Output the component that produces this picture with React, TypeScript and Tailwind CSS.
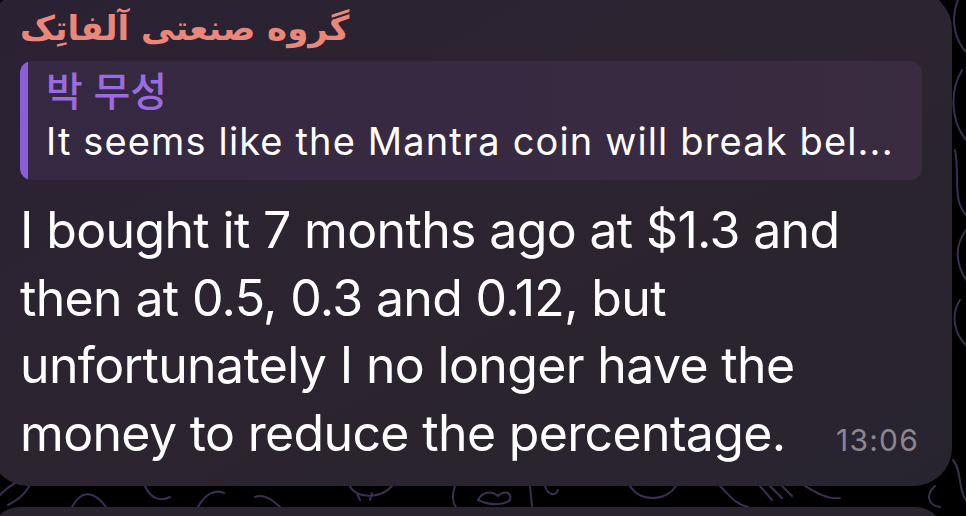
import React from "react";

const lines = [
  "I bought it 7 months ago at $1.3 and",
  "then at 0.5, 0.3 and 0.12, but",
  "unfortunately I no longer have the",
];

function Wallpaper() {
  return (
    <svg className="absolute inset-0" width="966" height="516" viewBox="0 0 966 516" fill="none">
      <g stroke="#3a2f52" strokeWidth="2" strokeLinecap="round">
        <path d="M958 0 C950 20 955 40 966 52" />
        <path d="M962 70 C950 90 950 120 966 140" />
        <path d="M955 150 C960 175 952 200 966 215" />
        <path d="M966 230 C955 245 955 262 966 280" />
        <path d="M960 300 C950 315 955 335 966 345" />
        <path d="M953 460 C962 470 958 490 966 500" />
        <path d="M0 495 C10 485 22 478 32 480 C28 492 18 500 8 505" />
        <path d="M72 507 C80 492 92 488 106 507" />
        <path d="M145 486 C150 498 160 502 170 497" />
        <path d="M198 507 C205 494 215 489 224 493" />
        <path d="M280 507 C270 497 262 494 255 497" />
        <path d="M350 486 C355 498 380 500 392 486" />
        <path d="M357 493 L360 500 M372 493 L370 500" />
        <path d="M455 486 C452 495 452 502 456 507" />
        <path d="M478 500 C482 492 492 490 498 496 C504 490 512 492 510 500 C505 505 490 506 478 500" />
        <path d="M530 486 L532 506 M545 486 C548 496 556 496 558 490" />
        <path d="M630 486 C640 502 665 502 676 486" />
        <path d="M720 486 C730 496 735 504 748 507" />
        <path d="M760 486 L772 500 M770 486 L782 498 M782 486 L792 496" />
        <path d="M805 486 C815 492 828 500 840 498" />
        <path d="M935 486 C925 495 928 505 940 507" />
      </g>
    </svg>
  );
}

export default function App() {
  return (
    <div className="relative w-[966px] h-[516px] overflow-hidden bg-black" style={{ fontFamily: "Inter, 'Noto Sans', sans-serif" }}>
      <Wallpaper />

      <div className="relative -ml-[10px] -mt-[9px] w-[962px] h-[495px] rounded-[38px] bg-gradient-to-br from-[#2a2233] via-[#2c2430] to-[#28242f] pl-[30px] pr-[33px] pt-[13px]">
        <div className="flex">
          <div dir="rtl" className="text-[34px] leading-[48px] font-bold text-[#e8877a]" style={{ fontFamily: "'DejaVu Sans', sans-serif" }}>
            گروه صنعتی آلفاتِک
          </div>
        </div>

        <div className="mt-[9px] flex h-[119px] w-[902px] overflow-hidden rounded-[12px] bg-gradient-to-r from-[#352842] to-[#3a2b40]">
          <div className="w-[8px] shrink-0 bg-[#8d5fd6]" />
          <div className="pl-[18px] pt-[6px]">
            <div className="text-[40px] leading-[50px] font-medium text-[#9a6ce0]" style={{ fontFamily: "Inter, 'Noto Sans CJK KR', sans-serif" }}>
              박 무성
            </div>
            <div className="text-[38px] leading-[48px] text-white tracking-[0.03em] whitespace-nowrap">
              It seems like the Mantra coin will break bel...
            </div>
          </div>
        </div>

        <div className="mt-[17px] text-[50px] leading-[67.5px] text-white tracking-[-0.013em]">
          {lines.map((l) => (
            <div key={l} className="whitespace-nowrap">{l}</div>
          ))}
          <div className="flex items-baseline whitespace-nowrap">
            <span>money to reduce the percentage.</span>
            <span className="ml-auto text-[30px] tracking-[0.04em] text-[#8b8791]">13:06</span>
          </div>
        </div>
      </div>

      <div className="relative -ml-[10px] mt-[21px] h-[40px] w-[955px] rounded-t-[30px] bg-[#29242f]" />
    </div>
  );
}
